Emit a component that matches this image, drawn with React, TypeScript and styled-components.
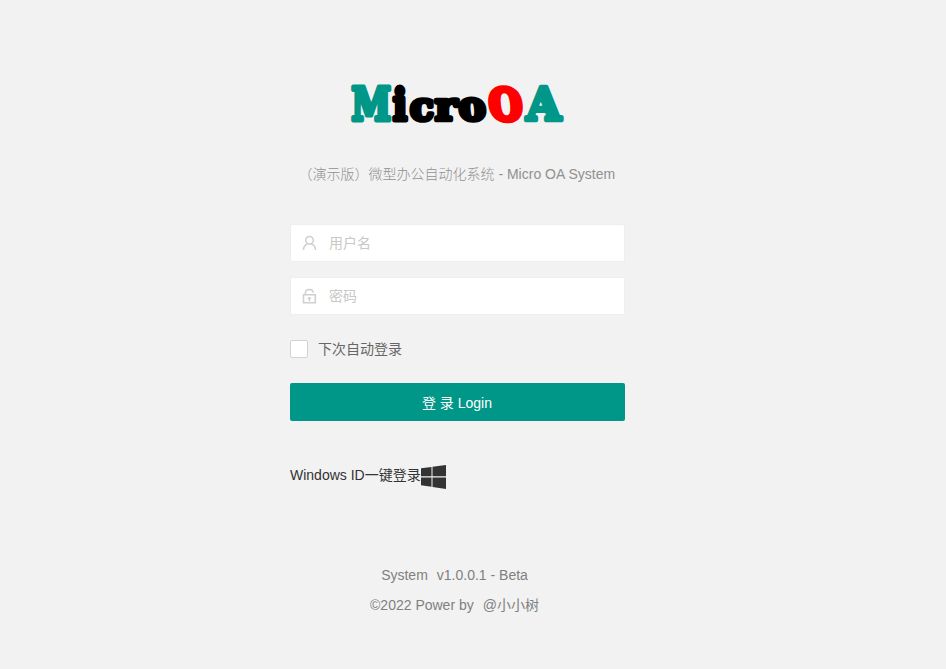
import React from "react";
import styled, { createGlobalStyle } from "styled-components";

const GlobalStyle = createGlobalStyle`
  * { box-sizing: border-box; }
  body {
    margin: 0;
    background: #f2f2f2;
    font: 14px/24px "Liberation Sans", "Noto Sans CJK SC", sans-serif;
    color: #333;
  }
`;

const Page = styled.main`
  display: flex;
  flex-direction: column;
  align-items: center;
  width: 915px;
  height: 669px;
  padding-top: 80px;
  overflow: hidden;
`;

const Logo = styled.svg`
  display: block;
  width: 220px;
  height: 48px;
  overflow: visible;
  font-family: "DejaVu Serif", serif;
  font-weight: bold;
  font-size: 46px;
  stroke-linejoin: round;
`;

const Subtitle = styled.p`
  margin: 34px 0 0;
  width: 318px;
  white-space: nowrap;
  font-weight: 300;
  color: #909090;
`;

const Latin = styled.span`
  font-weight: 400;
`;

const Form = styled.form`
  display: flex;
  flex-direction: column;
  width: 335px;
  margin-top: 38px;
`;

const Field = styled.label`
  display: flex;
  align-items: center;
  height: 38px;
  margin-bottom: 15px;
  padding-left: 11px;
  gap: 12px;
  background: #fff;
  border: 1px solid #eee;
  border-radius: 2px;
`;

const FieldIcon = styled.svg`
  width: 15px;
  height: 16px;
  fill: none;
  stroke: #cfcfcf;
  stroke-width: 1.5;
`;

const Input = styled.input`
  flex: 1;
  min-width: 0;
  padding: 0;
  border: 0;
  outline: 0;
  background: transparent;
  font: inherit;
  color: #333;
  &::placeholder { color: #c8c8c8; opacity: 1; }
`;

const Remember = styled.label`
  display: flex;
  align-items: center;
  gap: 10px;
  height: 18px;
  margin-top: 10px;
  color: #666;
`;

const Checkbox = styled.input`
  appearance: none;
  width: 18px;
  height: 18px;
  margin: 0;
  background: #fff;
  border: 1px solid #d2d2d2;
  border-radius: 2px;
`;

const LoginButton = styled.button`
  height: 38px;
  margin-top: 25px;
  padding: 2px 1px 0 0;
  border: 0;
  border-radius: 2px;
  background: #009688;
  color: #fff;
  font: inherit;
`;

const WindowsLogin = styled.a`
  display: flex;
  align-items: center;
  height: 26px;
  margin-top: 43px;
  white-space: nowrap;
  color: #333;
`;

const WindowsText = styled.span`
  width: 131px;
  margin-top: -4px;
`;

const WindowsIcon = styled.svg`
  width: 25px;
  height: 24px;
  fill: #333;
`;

const Footer = styled.footer`
  display: flex;
  flex-direction: column;
  align-items: center;
  width: 335px;
  margin-top: 70px;
  line-height: 30px;
  color: #808080;
`;

const FooterLine = styled.div`
  display: flex;
  gap: 9px;
  margin-right: 6px;
  white-space: nowrap;
`;

interface LetterSpec {
  char: string;
  x: number;
  sx: number;
  sy: number;
  color: string;
  stroke: number;
  skew: number;
}

const letters: LetterSpec[] = [
  { char: "M", x: 3.5, sx: 0.775, sy: 0.97, color: "#009688", stroke: 5, skew: 0 },
  { char: "i", x: 45, sx: 0.8, sy: 0.94, color: "#000", stroke: 5.4, skew: 0 },
  { char: "c", x: 62, sx: 0.85, sy: 0.87, color: "#000", stroke: 5.4, skew: 0 },
  { char: "r", x: 87, sx: 0.91, sy: 0.87, color: "#000", stroke: 5.4, skew: 0 },
  { char: "o", x: 111.5, sx: 0.88, sy: 0.87, color: "#000", stroke: 5.2, skew: 4 },
  { char: "O", x: 142.7, sx: 0.82, sy: 0.94, color: "#f00", stroke: 5.8, skew: 6 },
  { char: "A", x: 178.5, sx: 0.96, sy: 0.97, color: "#009688", stroke: 4.8, skew: 0 },
];

const BrandLogo = () => (
  <Logo viewBox="0 0 220 48" role="img" aria-label="MicroOA">
    {letters.map((l) => (
      <text
        key={l.char}
        transform={`translate(${l.x} 39.5) skewX(${l.skew}) scale(${l.sx} ${l.sy})`}
        fill={l.color}
        stroke={l.color}
        strokeWidth={l.stroke}
      >
        {l.char}
      </text>
    ))}
  </Logo>
);

export default function App() {
  return (
    <>
      <GlobalStyle />
      <Page>
        <BrandLogo />
        <Subtitle>
          （演示版）微型办公自动化系统 <Latin>- Micro OA System</Latin>
        </Subtitle>
        <Form>
          <Field>
            <FieldIcon viewBox="0 0 15 16">
              <circle cx="7.5" cy="5.3" r="3.8" />
              <path d="M1.5 15c0-3.5 1.6-5.2 4-6M9.3 9c2.7.8 4.2 2.8 4.2 6" />
            </FieldIcon>
            <Input placeholder="用户名" />
          </Field>
          <Field>
            <FieldIcon viewBox="0 0 15 16">
              <path d="M1.5 6.7h11.8v8H1.5zM3.4 6.5V4.7c.5-4.2 7.4-4.2 8 0M7.4 9v4.2M5.7 10.3h3.4" />
            </FieldIcon>
            <Input type="password" placeholder="密码" />
          </Field>
          <Remember>
            <Checkbox type="checkbox" />
            下次自动登录
          </Remember>
          <LoginButton type="button">登 录 Login</LoginButton>
          <WindowsLogin>
            <WindowsText>Windows ID一键登录</WindowsText>
            <WindowsIcon viewBox="0 0 25 25" preserveAspectRatio="none">
              <path d="M0 3.5 10.5 2v9.8H0zM11.5 1.8 25 0v11.8H11.5zM0 12.9h10.5v9.7L0 21.2zM11.5 12.9H25V25l-13.5-2z" />
            </WindowsIcon>
          </WindowsLogin>
        </Form>
        <Footer>
          <FooterLine>
            <span>System</span>
            <span>v1.0.0.1 - Beta</span>
          </FooterLine>
          <FooterLine>
            <span>©2022 Power by</span>
            <span>@小小树</span>
          </FooterLine>
        </Footer>
      </Page>
    </>
  );
}
